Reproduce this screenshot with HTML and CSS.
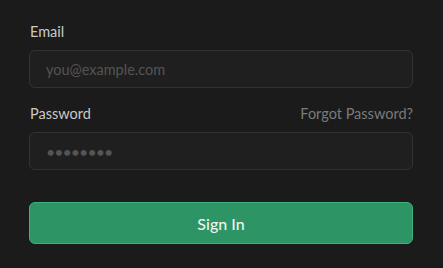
FILE: index.html
```html
<!DOCTYPE html>
<html>
<head>
<meta charset="utf-8">
<link rel="stylesheet" href="styles.css">
</head>
<body>
<form class="form">
  <div class="field">
    <div class="label-row"><label class="label" for="email">Email</label></div>
    <input class="input" id="email" type="text" placeholder="you@example.com">
  </div>
  <div class="field">
    <div class="label-row">
      <label class="label" for="pw">Password</label>
      <a class="forgot" href="#">Forgot Password?</a>
    </div>
    <input class="input pw" id="pw" type="text" placeholder="••••••••">
  </div>
  <button class="btn" type="button">Sign In</button>
</form>
</body>
</html>
```
FILE: styles.css
```css
html, body {
  margin: 0;
  padding: 0;
  background: #1b1b1b;
  height: 100%;
}
body {
  font-family: Lato, "Noto Sans", sans-serif;
}
.form {
  display: flex;
  flex-direction: column;
  padding: 22px 30px 0 29px;
}
.field {
  display: flex;
  flex-direction: column;
  gap: 8px;
  margin-bottom: 16px;
}
.label-row {
  display: flex;
  justify-content: space-between;
  align-items: center;
  height: 20px;
}
.label {
  font-size: 14.5px;
  line-height: 20px;
  color: #c9c9c9;
  padding-left: 1px;
}
.forgot {
  font-size: 14.5px;
  line-height: 20px;
  color: #7a7a7a;
  text-decoration: none;
}
.input {
  box-sizing: border-box;
  height: 38px;
  width: 100%;
  margin: 0;
  padding: 0 16px;
  background: #1f1f1f;
  border: 1px solid #323232;
  border-radius: 6px;
  font-family: Lato, "Noto Sans", sans-serif;
  font-size: 14.5px;
  color: #ddd;
  outline: none;
}
.input::placeholder {
  color: #545454;
}
.pw {
  font-size: 16px;
}
.pw::placeholder {
  letter-spacing: -1px;
}
.btn {
  margin-top: 16px;
  box-sizing: border-box;
  height: 42px;
  width: 100%;
  background: #2d9465;
  border: 1px solid #3fb27b;
  border-radius: 6px;
  color: #eaf6ef;
  font-family: Lato, "Noto Sans", sans-serif;
  font-size: 16px;
  font-weight: 500;
  cursor: pointer;
}
```
